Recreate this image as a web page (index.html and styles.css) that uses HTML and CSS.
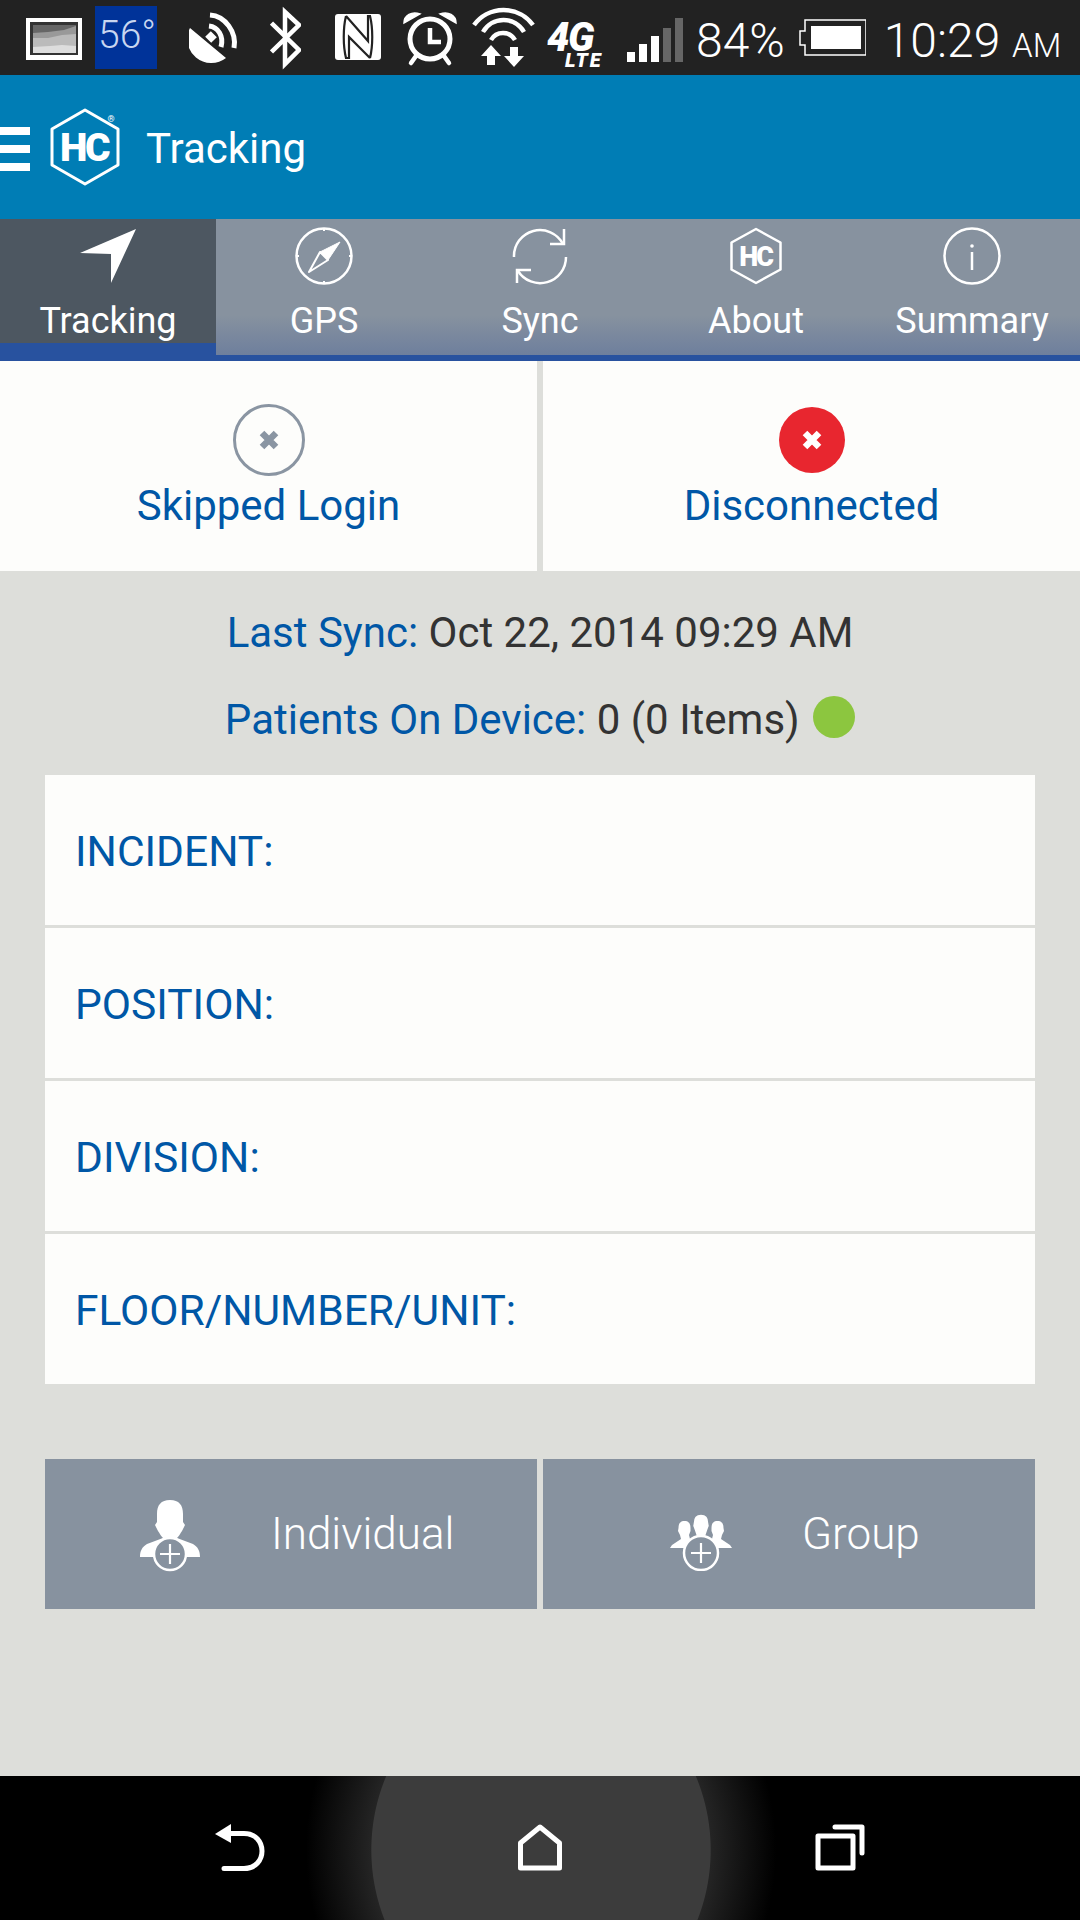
FILE: index.html
```html
<!DOCTYPE html>
<html lang="en">
<head>
    <meta charset="UTF-8">
    <meta name="viewport" content="width=device-width, initial-scale=1.0">
    <title>Tracking</title>
    <link rel="stylesheet" href="styles.css">
</head>
<body>
    <!-- Android status bar -->
    <div class="status-bar">
        <svg class="si si-thumb" width="56" height="75" viewBox="0 0 56 75">
            <rect x="0" y="18" width="56" height="42" fill="#fff"/>
            <rect x="4" y="22" width="48" height="33" fill="#333"/>
            <rect x="7" y="25" width="43" height="28" fill="#666"/>
            <path d="M7 33 L22 32 L38 30 L50 26 V53 H7 Z" fill="#999"/>
            <path d="M7 38 L22 38 L36 35 L50 34 V53 H7 Z" fill="#bbb"/>
            <path d="M7 47 L24 46 L36 45 L50 46 V53 H7 Z" fill="#ddd"/>
        </svg>
        <div class="weather">56°</div>
        <svg class="si si-dish" width="50" height="75" viewBox="0 0 50 75" fill="none" stroke="#fff">
            <path d="M1 28 A24 24 0 0 0 37 58 Z" fill="#fff" stroke="none"/>
            <path d="M19 34 L25 40" stroke-width="8"/>
            <path d="M21 15 C36 16 48 32 45 48" stroke-width="5"/>
            <path d="M20 26 C29 27 35 36 32 47" stroke-width="5"/>
        </svg>
        <svg class="si si-bt" width="31" height="75" viewBox="0 0 31 75" fill="none" stroke="#fff" stroke-width="4.5">
            <path d="M1.5 23 L29 50 L15 64 V12 L29 25 L1.5 52"/>
        </svg>
        <svg class="si si-nfc" width="46" height="75" viewBox="0 0 46 75">
            <rect x="0" y="14" width="46" height="46" rx="3" fill="#fff"/>
            <path d="M11 16 C8 28 8 46 11 58 H14 V37 L35 58 M11 16 L33 41 V16 H35 C38 28 38 46 35 58" fill="none" stroke="#222" stroke-width="2.2"/>
        </svg>
        <svg class="si si-alarm" width="55" height="75" viewBox="0 0 55 75" fill="none" stroke="#fff">
            <circle cx="27" cy="39" r="20" stroke-width="5"/>
            <path d="M27 28 V42 H38" stroke-width="4.5"/>
            <path d="M1 23 C1 15 9 11 17 14 Z M53 23 C53 15 45 11 37 14 Z" fill="#fff" stroke-width="1.5"/>
            <path d="M13 56 L8 63 M41 56 L46 63" stroke-width="4.5" stroke-linecap="round"/>
        </svg>
        <svg class="si si-wifi" width="63" height="75" viewBox="0 0 63 75" fill="none" stroke="#fff" stroke-width="4.5">
            <path d="M2 25 A36.5 36.5 0 0 1 61 25"/>
            <path d="M11 32 A23.5 23.5 0 0 1 52 32"/>
            <path d="M19 40 A13.8 13.8 0 0 1 43 40"/>
            <path d="M19 45 L29 56 H23 V65 H15 V56 H9 Z M42 67 L52 56 H46 V47 H38 V56 H32 Z" fill="#fff" stroke="none"/>
        </svg>
        <svg class="si si-lte" width="59" height="75" viewBox="0 0 59 75" fill="#fff" font-family="Roboto, sans-serif" font-weight="900" font-style="italic">
            <text x="0" y="51" font-size="40" letter-spacing="-1.500">4G</text>
            <text x="18" y="67" font-size="20" letter-spacing="2">LTE</text>
        </svg>
        <div class="signal">
            <span class="bar bar-1"></span>
            <span class="bar bar-2"></span>
            <span class="bar bar-3"></span>
            <span class="bar bar-4"></span>
            <span class="bar bar-5"></span>
        </div>
        <div class="status-text pct">84%</div>
        <svg class="si si-batt" width="67" height="75" viewBox="0 0 67 75" fill="none" stroke="#fff" stroke-width="1.5">
            <path d="M6 20 H67 V55 H6 V45 H1 V31 H6 Z"/>
            <rect x="12" y="26" width="50" height="23" fill="#fff" stroke="none"/>
        </svg>
        <div class="status-text clock">10:29 <small>AM</small></div>
    </div>

    <header class="app-bar">
        <div class="hamburger"><span></span><span></span><span></span></div>
        <svg class="logo" width="72" height="78" viewBox="0 0 72 78">
            <path d="M36 2 L69 21 V57 L36 76 L3 57 V21 Z" fill="none" stroke="#fff" stroke-width="3" stroke-linejoin="round"/>
            <text x="35" y="53" text-anchor="middle" fill="#fff" font-family="Roboto, sans-serif" font-weight="900" font-size="39" letter-spacing="-2.500">HC</text>
            <text x="62" y="14" text-anchor="middle" fill="#fff" font-family="Roboto, sans-serif" font-size="9">®</text>
        </svg>
        <h1 class="app-title">Tracking</h1>
    </header>

    <nav class="tabs">
        <div class="tab active">
            <svg width="60" height="60" viewBox="0 0 60 60"><path d="M58 3 L2 27 L33 28 V57 Z" fill="#fff"/></svg>
            <span>Tracking</span>
        </div>
        <div class="tab">
            <svg width="60" height="60" viewBox="-30 -30 60 60" fill="none" stroke="#fff" stroke-width="2.5">
                <circle r="27.5"/>
                <path d="M0 -28 V-25 M0 28 V25 M-28 0 H-25 M28 0 H25" stroke-width="2"/>
                <path d="M16 -14 L-4 -4 L4 4 Z" fill="#fff" stroke-width="1"/>
                <path d="M-15 16 L-4 -4 L4 4 Z" stroke-width="2" stroke-linejoin="round"/>
            </svg>
            <span>GPS</span>
        </div>
        <div class="tab">
            <svg width="60" height="60" viewBox="-30 -30 60 60" fill="none" stroke="#fff" stroke-width="2.5">
                <path d="M-26 1 A26 26 0 0 1 23 -12"/>
                <path d="M26 1 A26 26 0 0 1 -22 15"/>
                <path d="M10 -12 H24 V-27 M-9 14 H-23 V27"/>
            </svg>
            <span>Sync</span>
        </div>
        <div class="tab">
            <svg width="60" height="60" viewBox="-30 -30 60 60">
                <path d="M0 -27 L24.500 -13.500 V13.500 L0 27 L-24.500 13.500 V-13.500 Z" fill="none" stroke="#fff" stroke-width="2.500" stroke-linejoin="round"/>
                <text x="-0.500" y="9.500" text-anchor="middle" fill="#fff" font-family="Roboto, sans-serif" font-weight="900" font-size="27" letter-spacing="-2">HC</text>
            </svg>
            <span>About</span>
        </div>
        <div class="tab">
            <svg width="60" height="60" viewBox="-30 -30 60 60" fill="none" stroke="#fff" stroke-width="2.5">
                <circle r="27.5"/>
                <circle cy="-10" r="1.8" fill="#fff" stroke="none"/>
                <path d="M0 -4 V14"/>
            </svg>
            <span>Summary</span>
        </div>
    </nav>

    <main class="content">
        <section class="status-row">
            <div class="status-card">
                <svg width="72" height="72" viewBox="-36 -36 72 72">
                    <circle r="34.5" fill="none" stroke="#8a95a2" stroke-width="3"/>
                    <path d="M-7 -7 L7 7 M7 -7 L-7 7" stroke="#8a95a2" stroke-width="6.5"/>
                </svg>
                <span class="status-label">Skipped Login</span>
            </div>
            <div class="status-card">
                <svg width="72" height="72" viewBox="-36 -36 72 72">
                    <circle r="33" fill="#e8262f"/>
                    <path d="M-7 -7 L7 7 M7 -7 L-7 7" stroke="#fff" stroke-width="6.5"/>
                </svg>
                <span class="status-label">Disconnected</span>
            </div>
        </section>

        <section class="sync-info">
            <p><span class="key">Last Sync:</span> Oct 22, 2014 09:29 AM</p>
            <p><span class="key">Patients On Device:</span> 0 (0 Items) <i class="dot"></i></p>
        </section>

        <section class="form-list">
            <div class="form-row">INCIDENT:</div>
            <div class="form-row">POSITION:</div>
            <div class="form-row">DIVISION:</div>
            <div class="form-row">FLOOR/NUMBER/UNIT:</div>
        </section>

        <section class="actions">
            <button class="action action-individual" type="button">
                <svg width="62" height="72" viewBox="0 0 62 72">
                    <path d="M31 0 C22 0 18 5 18 14 V22 L16 25 L19 31 C21 34 22 36 24 38 L8 44 C3 47 1 51 1 57 H61 C61 51 59 47 54 44 L38 38 C40 36 41 34 43 31 L46 25 L44 22 V14 C44 5 40 0 31 0 Z" fill="#fff"/>
                    <circle cx="31" cy="54" r="16" fill="#87929f" stroke="#fff" stroke-width="2.5"/>
                    <path d="M31 44 V64 M21 54 H41" stroke="#fff" stroke-width="2.2"/>
                </svg>
                <span>Individual</span>
            </button>
            <button class="action action-group" type="button">
                <svg width="62" height="57" viewBox="0 0 62 57">
                    <g fill="#fff">
                        <path id="side-head" d="M14.500 7 C10 7 8.500 10 8.500 14 L8 17 L10 21 L11 25 L2 31 L0 34 H18 L20 25 L19 21 L20.500 17 L20.500 14 C20.500 10 19 7 14.500 7 Z"/>
                        <path d="M14.500 7 C10 7 8.500 10 8.500 14 L8 17 L10 21 L11 25 L2 31 L0 34 H18 L20 25 L19 21 L20.500 17 L20.500 14 C20.500 10 19 7 14.500 7 Z" transform="translate(62 0) scale(-1 1)"/>
                        <path d="M31 0 C26 0 23 3.500 23 9 L22.500 12 L24 16 L26 22 L22 25 L20 29 H42 L40 25 L36 22 L38 16 L39.500 12 L39 9 C39 3.500 36 0 31 0 Z" stroke="#87929f" stroke-width="1.500"/>
                    </g>
                    <circle cx="31" cy="39" r="17" fill="#87929f" stroke="#fff" stroke-width="2.5"/>
                    <path d="M31 29 V49 M21 39 H41" stroke="#fff" stroke-width="2.2"/>
                </svg>
                <span>Group</span>
            </button>
        </section>
    </main>

    <footer class="nav-bar">
        <svg width="52" height="48" viewBox="0 0 52 48" fill="none" stroke="#fff" stroke-width="5" stroke-linecap="round">
            <path d="M15 9.5 H29 C53 9.5 53 44.5 29 44.5 H9"/>
            <path d="M0 10 L16 0 V19 Z" fill="#fff" stroke="none"/>
        </svg>
        <svg width="44" height="47" viewBox="0 0 44 47" fill="none" stroke="#fff" stroke-width="5" stroke-linejoin="round">
            <path d="M22 3 L41.500 19 V44 H2.500 V19 Z"/>
        </svg>
        <svg width="50" height="47" viewBox="0 0 50 47" fill="none" stroke="#fff" stroke-width="5" stroke-linecap="round" stroke-linejoin="round">
            <rect x="3" y="12" width="35" height="32"/>
            <path d="M20 3 H47 V29"/>
        </svg>
    </footer>
</body>
</html>
```
FILE: styles.css
```css
* {
    box-sizing: border-box;
}

html, body {
    margin: 0;
    padding: 0;
}

body {
    width: 1080px;
    height: 1920px;
    display: flex;
    flex-direction: column;
    overflow: hidden;
    font-family: Roboto, sans-serif;
    background: #dddeda;
    color: #333;
}

/* status bar */
.status-bar {
    height: 75px;
    flex: none;
    display: flex;
    align-items: center;
    padding-left: 26px;
    background: #222;
    color: #fff;
}

.si {
    flex: none;
}

.weather {
    width: 62px;
    height: 63px;
    margin-left: 13px;
    padding: 4px 0 0 3px;
    background: #003399;
    color: #c9d6f0;
    font-size: 39px;
    font-weight: 300;
    line-height: 50px;
    white-space: nowrap;
}

.si-dish { margin-left: 32px; }
.si-bt { margin-left: 31px; }
.si-nfc { margin-left: 34px; }
.si-alarm { margin-left: 22px; }
.si-wifi { margin-left: 14px; }
.si-lte { margin-left: 12px; }
.si-batt { margin-left: 14px; }

.signal {
    display: flex;
    align-items: flex-end;
    gap: 4px;
    height: 44px;
    margin: 5px 0 0 21px;
}

.bar {
    width: 8px;
    background: #fff;
}

.bar-1 { height: 10px; }
.bar-2 { height: 18px; }
.bar-3 { height: 26px; }
.bar-4 { height: 34px; background: #666; }
.bar-5 { height: 44px; background: #666; }

.status-text {
    margin-top: 5px;
    font-size: 48px;
    font-weight: 300;
    white-space: nowrap;
}

.status-text small {
    font-size: 33px;
    font-weight: 300;
}

.pct {
    margin-left: 13px;
}

.clock {
    margin-left: 18px;
}

/* app bar */
.app-bar {
    height: 144px;
    flex: none;
    display: flex;
    align-items: center;
    background: #007db5;
    color: white;
}

.hamburger {
    display: flex;
    flex-direction: column;
    gap: 10px;
    width: 30px;
    margin: 4px 19px 0 0;
}

.hamburger span {
    height: 8px;
    background: #fff;
}

.app-title {
    margin: 3px 0 0 25px;
    font-size: 42px;
    font-weight: 400;
}

/* tabs */
.tabs {
    height: 142px;
    flex: none;
    display: flex;
}

.tab {
    flex: 1;
    display: flex;
    flex-direction: column;
    align-items: center;
    padding-top: 7px;
    border-bottom: 6px solid #28529f;
    background: linear-gradient(180deg, #87929f 0, #87929f 96px, #6e7f9d 136px);
    color: #fff;
    font-size: 36px;
    font-weight: 400;
}

.tab span {
    margin-top: 15px;
    line-height: 40px;
}

.tab.active {
    border-bottom-width: 18px;
    background: #4d5761;
}

/* login and connection state */
.status-row {
    height: 210px;
    display: flex;
    gap: 6px;
}

.status-card {
    flex: 1;
    display: flex;
    flex-direction: column;
    align-items: center;
    padding-top: 43px;
    background: #fdfdfb;
}

.status-label {
    margin-top: 6px;
    color: #0057a6;
    font-size: 42px;
    line-height: 48px;
}

.sync-info {
    padding-top: 18px;
    text-align: center;
    font-size: 42px;
    line-height: 87px;
}

.sync-info p {
    margin: 0;
}

.key {
    color: #0057a6;
}

.dot {
    display: inline-block;
    width: 42px;
    height: 42px;
    margin-left: 3px;
    border-radius: 50%;
    background: #8cc63f;
    vertical-align: -4px;
}

/* form rows */
.form-list {
    display: flex;
    flex-direction: column;
    gap: 3px;
    margin: 12px 45px 0;
}

.form-row {
    height: 150px;
    display: flex;
    align-items: center;
    padding: 2px 0 0 30px;
    background: #fdfdfb;
    color: #0057a6;
    font-size: 42.5px;
}

/* add buttons */
.actions {
    display: grid;
    grid-template-columns: 1fr 1fr;
    gap: 6px;
    margin: 75px 45px 0;
}

.action {
    height: 150px;
    display: flex;
    align-items: center;
    border: none;
    background: #87929f;
    color: #fff;
    font-family: inherit;
    font-size: 44px;
    font-weight: 300;
}

.action span {
    margin-left: 70px;
}

.action-individual {
    padding: 0 0 0 94px;
}

.action-group {
    padding: 0 0 0 127px;
}

.action-individual svg {
    margin-top: 3px;
}

.action-group svg {
    margin-top: 17px;
}

/* android buttons */
.nav-bar {
    height: 144px;
    margin-top: auto;
    flex: none;
    display: flex;
    align-items: flex-start;
    padding: 48px 0 0 215px;
    background: radial-gradient(ellipse 235px 250px at 541px 74px, #3c3c3c 0, #3c3c3c 72%, #242424 72.4%, #000 100%);
}

.nav-bar svg:nth-child(2) {
    margin-left: 251px;
}

.nav-bar svg:nth-child(3) {
    margin-left: 253px;
}
```
